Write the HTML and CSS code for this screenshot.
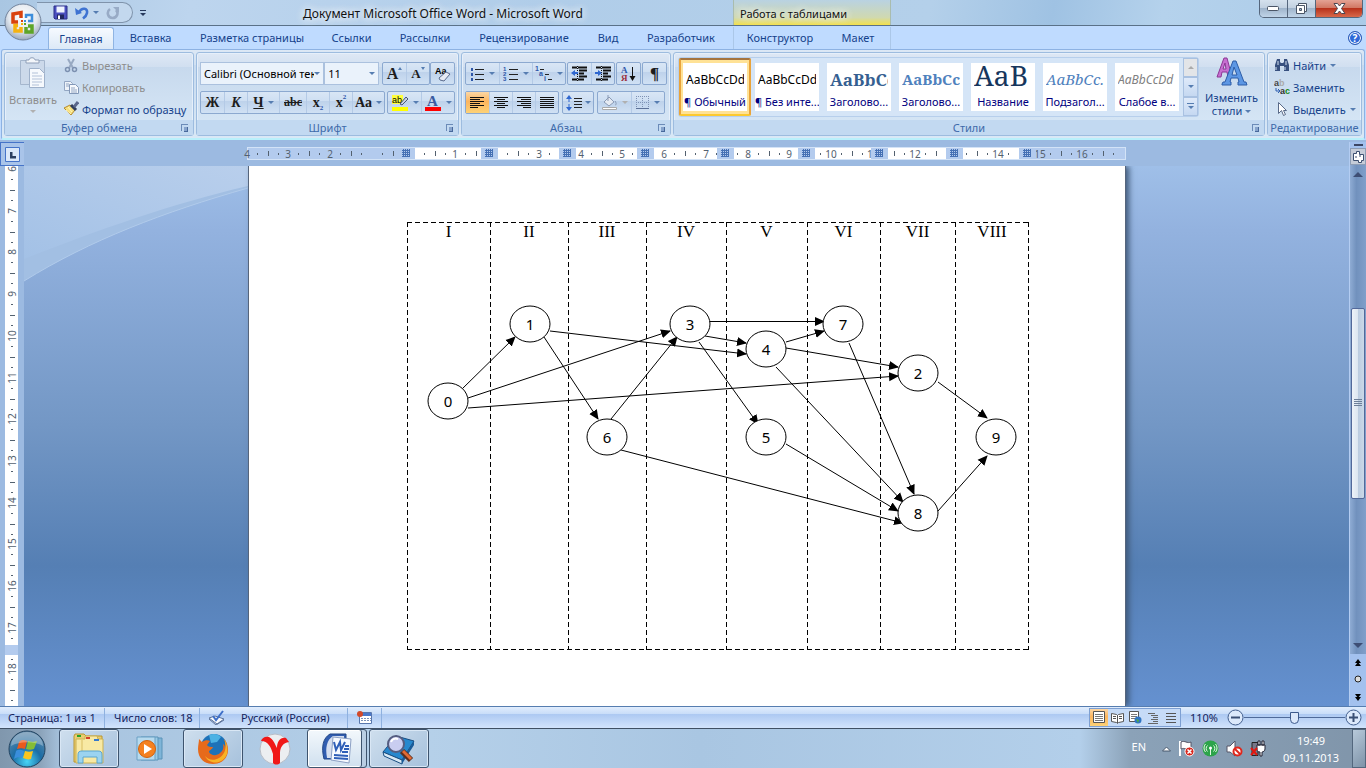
FILE: index.html
```html
<!DOCTYPE html>
<html lang="ru">
<head>
  <meta charset="UTF-8" />
  <meta name="viewport" content="width=device-width, initial-scale=1.0" />
  <title>Документ Microsoft Office Word - Microsoft Word</title>
  <link rel="stylesheet" href="styles.css">
</head>
<body>
  <header class="titlebar">
    <div class="quick-access">
      <button aria-label="Сохранить"><svg width="15" height="15" viewBox="0 0 15 15"><path d="M1 1h13v13H2l-1-1z" fill="#4a4fc0" stroke="#2b2f86"/><path d="M3.500 1.500h8v6h-8z" fill="#eef3ff"/><path d="M4 9.500h7V14H4z" fill="#20275e"/><path d="M5 10.500h2V14H5z" fill="#fff"/></svg></button>
      <button aria-label="Отменить"><svg width="15" height="14" viewBox="0 0 15 14"><path d="M4 6c3-5 9-4 8 1-.4 2.500-2 4-4 5.500" fill="none" stroke="#3f73d2" stroke-width="2.600"/><path d="M0 2l1 7 6-2z" fill="#3f73d2"/></svg></button>
      <i class="caret"></i>
      <button class="redo" aria-label="Вернуть"><svg width="14" height="14" viewBox="0 0 14 14"><path d="M4 3c-4 3-2 9 2.500 9S13 7 10 4" fill="none" stroke="#98abc6" stroke-width="2.600"/><path d="M7 1h6v6z" fill="#98abc6"/></svg></button>
    </div>
    <button class="qa-more" aria-label="Настройка панели быстрого доступа"><i class="caret"></i></button>
    <h1>Документ Microsoft Office Word - Microsoft Word</h1>
    <div class="context-title">Работа с таблицами</div>
    <div class="window-controls">
      <button aria-label="Свернуть"><svg width="13" height="6"><rect x=".5" y=".5" width="11" height="4" rx="1" fill="#fff" stroke="#4b5667"/></svg></button>
      <button aria-label="Восстановить"><svg width="13" height="13"><path d="M3.500 1.500h8v8h-8z" fill="#fff" stroke="#4b5667"/><path d="M1.500 3.500h8v8h-8z" fill="#fff" stroke="#4b5667"/><path d="M4.500 6.500h2v2h-2z" fill="#9fb4cb" stroke="#4b5667"/></svg></button>
      <button class="close" aria-label="Закрыть"><svg width="13" height="11" viewBox="0 0 13 11"><path d="M1 .5h3.500l2 2.500 2-2.500H12L8.500 5.500l3.500 5H8.500l-2-2.500-2 2.500H1l3.500-5z" fill="#fff" stroke="#4b4650"/></svg></button>
    </div>
  </header>
  <button class="office-button" aria-label="Кнопка Office">
    <svg width="38" height="38" viewBox="0 0 38 38">
      <defs><radialGradient id="orb" cx=".5" cy=".35" r=".65"><stop offset="0" stop-color="#fff"/><stop offset=".6" stop-color="#e3e8ef"/><stop offset="1" stop-color="#9aa9bd"/></radialGradient></defs>
      <circle cx="19" cy="19" r="18" fill="url(#orb)" stroke="#72839c"/>
      <g fill="none" stroke-width="3.500">
        <path d="M17 15V9.500l-8 1.500v8h5" stroke="#d9420e"/>
        <path d="M22 15v-3h6v6h-4" stroke="#3f8edb" stroke-width="2.500"/>
        <path d="M14 22.500H11V28h6v-4" stroke="#f5b211"/>
        <path d="M22 24v5h6v-6h-4" stroke="#5da528"/>
      </g>
      <path d="M17 17h2v2h-2z" fill="#d9420e"/><path d="M20 17h2v2h-2z" fill="#3f8edb"/><path d="M17 20h2v2h-2z" fill="#f5b211"/><path d="M20 20h2v2h-2z" fill="#5da528"/>
    </svg>
  </button>

  <nav class="tabs">
    <a href="#" class="tab home active">Главная</a>
    <a href="#" class="tab insert">Вставка</a>
    <a href="#" class="tab layout">Разметка страницы</a>
    <a href="#" class="tab links">Ссылки</a>
    <a href="#" class="tab mail">Рассылки</a>
    <a href="#" class="tab review">Рецензирование</a>
    <a href="#" class="tab view">Вид</a>
    <a href="#" class="tab developer">Разработчик</a>
    <div class="context-tabs">
      <a href="#" class="tab design">Конструктор</a>
      <a href="#" class="tab table-layout">Макет</a>
    </div>
    <button class="help" aria-label="Справка">?</button>
  </nav>

  <section class="ribbon">
    <div class="group clipboard">
      <div class="group-body">
        <button class="big disabled">
          <svg width="28" height="32" viewBox="0 0 28 32"><path d="M1.500 3.500h24v24h-24z" fill="#ccd9ea" stroke="#a5b6cd"/><path d="M7 6V3h3c0-3 6-3 6 0h4v3z" fill="#f3f6fa" stroke="#8f9fb8"/><path d="M10.500 11.500h10l5 5v14h-15z" fill="#f6f9fd" stroke="#9fb1ca"/><path d="M13 16h6M13 19h10M13 22h10M13 25h10M13 28h7" stroke="#b2c1d8"/></svg>
          <span>Вставить</span><i class="caret"></i>
        </button>
        <div class="stack">
          <button class="row disabled"><svg width="16" height="16" viewBox="0 0 16 16"><path d="M5 2l5 9M11 2L6 11" stroke="#98a9c2" stroke-width="2"/><circle cx="4.500" cy="12.500" r="2" fill="none" stroke="#7c90b0" stroke-width="1.500"/><circle cx="11.500" cy="12.500" r="2" fill="none" stroke="#7c90b0" stroke-width="1.500"/></svg>Вырезать</button>
          <button class="row disabled"><svg width="16" height="16" viewBox="0 0 16 16"><path d="M1.500 2.500h6l2 2v7h-8z" fill="#eef3f9" stroke="#93a6c3"/><path d="M6.500 5.500h6l3 3v6h-9z" fill="#f6f9fd" stroke="#8398b8"/><path d="M3 5h3M3 7h3M8 9h4M8 11h6M8 13h6" stroke="#93a6c3"/></svg>Копировать</button>
          <button class="row"><svg width="16" height="16" viewBox="0 0 16 16"><path d="M1 7l6-3 5 5-4 5z" fill="#f6df7d" stroke="#b58a2c"/><path d="M3 9l5 4M5 6l4 5" stroke="#fff6c0"/><path d="M8 4l5 5" stroke="#333f5c" stroke-width="3"/><path d="M11 6l4-5" stroke="#5b688c" stroke-width="3"/></svg>Формат по образцу</button>
        </div>
      </div>
      <footer>Буфер обмена<button class="launcher" aria-label="Буфер обмена"></button></footer>
    </div>

    <div class="group font">
      <div class="group-body rows">
        <div class="tool-row">
          <label class="combo face"><select aria-label="Шрифт"><option>Calibri (Основной текст)</option></select><i class="caret"></i></label>
          <label class="combo size"><select aria-label="Размер шрифта"><option>11</option></select><i class="caret"></i></label>
          <div class="tools gap-left">
            <button class="glyph grow" aria-label="Увеличить размер">A<i class="up"></i></button>
            <button class="glyph shrink" aria-label="Уменьшить размер">A<i class="caret"></i></button>
          </div>
          <div class="tools push"><button aria-label="Очистить формат"><svg width="18" height="16" viewBox="0 0 18 16"><text x="1" y="8" font-size="9" font-weight="bold" font-family="Liberation Sans">Aa</text><path d="M5 12l7-6 4 2-6 7-4-1z" fill="#e6eaf3" stroke="#5a6b8d"/></svg></button></div>
        </div>
        <div class="tool-row">
          <div class="tools">
            <button class="glyph bold" aria-label="Полужирный">Ж</button>
            <button class="glyph italic" aria-label="Курсив">К</button>
            <button class="glyph underline wide" aria-label="Подчеркнутый"><u>Ч</u><i class="caret"></i></button>
            <button class="glyph strike" aria-label="Зачеркнутый"><s>abc</s></button>
            <button class="glyph" aria-label="Подстрочный">x<sub>2</sub></button>
            <button class="glyph" aria-label="Надстрочный">x<sup>2</sup></button>
            <button class="glyph case" aria-label="Регистр">Aa<i class="caret"></i></button>
          </div>
          <div class="tools push">
            <button class="split" aria-label="Цвет выделения"><svg width="18" height="18" viewBox="0 0 18 18"><path d="M1 1h11v9H1z" fill="#ffff3c"/><text x="1" y="9" font-size="9" font-family="Liberation Sans">ab</text><path d="M9 10l6-7 2 2-6 6z" fill="#c9d3e4" stroke="#465578"/><path d="M1 13h16v4H1z" fill="#ff0"/></svg><i class="caret"></i></button>
            <button class="split" aria-label="Цвет текста"><svg width="18" height="18" viewBox="0 0 18 18"><text x="3" y="12" font-size="15" font-weight="bold" fill="#3a5ba0" font-family="Liberation Serif">A</text><path d="M1 13h16v4H1z" fill="red"/></svg><i class="caret"></i></button>
          </div>
        </div>
      </div>
      <footer>Шрифт<button class="launcher" aria-label="Шрифт"></button></footer>
    </div>

    <div class="group paragraph">
      <div class="group-body rows">
        <div class="tool-row spread">
          <div class="tools lists">
            <button class="split" aria-label="Маркеры"><svg width="15" height="14"><path d="M5 2.500h9M5 7.500h9M5 12.500h9" stroke="#222"/><path d="M1 1h2v3H1zM1 6h2v3H1zM1 11h2v3H1z" fill="#2d56a8"/></svg><i class="caret"></i></button>
            <button class="split" aria-label="Нумерация"><svg width="16" height="16"><path d="M6 3.500h9M6 8.500h9M6 13.500h9" stroke="#222"/><g font-size="6" font-weight="bold" fill="#2d56a8" font-family="Liberation Sans"><text x="0" y="5">1</text><text x="0" y="10">2</text><text x="0" y="15">3</text></g></svg><i class="caret"></i></button>
            <button class="split" aria-label="Многоуровневый список"><svg width="18" height="16"><path d="M5 3.500h4M10 8.500h4M13 13.500h4" stroke="#222"/><g font-size="7" font-weight="bold" fill="#2d56a8" font-family="Liberation Sans"><text x="0" y="5">1</text><text x="4" y="10">a</text><text x="9" y="15">i</text></g></svg><i class="caret"></i></button>
          </div>
          <div class="tools">
            <button aria-label="Уменьшить отступ"><svg width="17" height="15"><path d="M1 1.500h5M7 1.500h9M8 4.500h8M8 7.500h5M8 10.500h8M1 13.500h5M7 13.500h6" stroke="#111" stroke-width="2"/><path d="M6.500 0v15" stroke="#111" stroke-dasharray="1 1"/><path d="M0 7l4-3v2h3v2H4v2z" fill="#2f67cf"/></svg></button>
            <button aria-label="Увеличить отступ"><svg width="17" height="15"><path d="M1 1.500h5M7 1.500h9M8 4.500h8M8 7.500h5M8 10.500h8M1 13.500h5M7 13.500h6" stroke="#111" stroke-width="2"/><path d="M6.500 0v15" stroke="#111" stroke-dasharray="1 1"/><path d="M7 7L3 4v2H0v2h3v2z" fill="#2f67cf"/></svg></button>
          </div>
          <div class="tools"><button aria-label="Сортировка"><svg width="15" height="16"><g font-size="9" font-weight="bold" font-family="Liberation Serif"><text x="0" y="7" fill="#2d56a8">А</text><text x="0" y="15" fill="#9c2f3c">Я</text></g><path d="M11.500 1v11" stroke="#111"/><path d="M8.500 10h6l-3 5z" fill="#111"/></svg></button></div>
          <div class="tools"><button class="glyph pilcrow" aria-label="Отобразить все знаки">¶</button></div>
        </div>
        <div class="tool-row small-gap">
          <div class="tools align">
            <button class="pressed" aria-label="По левому краю"><svg width="15" height="12"><path d="M0 .5h14M0 2.500h10M0 4.500h14M0 6.500h10M0 8.500h14M0 10.500h8" stroke="#111"/></svg></button>
            <button aria-label="По центру"><svg width="15" height="12"><path d="M0 .5h14M3 2.500h8M0 4.500h14M3 6.500h8M0 8.500h14M3 10.500h8" stroke="#111"/></svg></button>
            <button aria-label="По правому краю"><svg width="15" height="12"><path d="M0 .5h14M4 2.500h10M0 4.500h14M4 6.500h10M0 8.500h14M6 10.500h8" stroke="#111"/></svg></button>
            <button aria-label="По ширине"><svg width="15" height="12"><path d="M0 .5h14M0 2.500h14M0 4.500h14M0 6.500h14M0 8.500h14M0 10.500h14" stroke="#111"/></svg></button>
          </div>
          <div class="tools"><button class="spacing" aria-label="Междустрочный интервал"><svg width="16" height="16"><path d="M3 3v10" stroke="#2f67cf" stroke-dasharray="4 2"/><path d="M0 4l3-4 3 4zM0 12l3 4 3-4z" fill="#2f67cf"/><path d="M8 3.500h8M8 6.500h8M8 9.500h8M8 12.500h8" stroke="#222"/></svg><i class="caret"></i></button></div>
          <div class="tools">
            <button class="split disabled" aria-label="Заливка"><svg width="17" height="17"><path d="M3 8l5-5 5 5-5 4z" fill="#e6ebf3" stroke="#8a9ab5"/><path d="M7 1v6M14 7c2 3 1 4 0 4" stroke="#8a9ab5" fill="none"/><path d="M1.500 13.500h14v2h-14z" fill="#fff" stroke="#aaa"/></svg><i class="caret"></i></button>
            <button class="split" aria-label="Границы"><svg width="14" height="14"><path d="M.5 0v12M6.500 0v12M12.500 0v12M0 .5h13M0 6.500h13" stroke="#7f93b5" stroke-dasharray="1 1"/><path d="M0 12.500h13" stroke="#5c7198"/></svg><i class="caret"></i></button>
          </div>
        </div>
      </div>
      <footer>Абзац<button class="launcher" aria-label="Абзац"></button></footer>
    </div>

    <div class="group styles">
      <div class="group-body">
        <div class="gallery">
          <button class="style selected"><span class="sample">AaBbCcDd</span><span class="name">¶ Обычный</span></button>
          <button class="style"><span class="sample">AaBbCcDd</span><span class="name">¶ Без инте...</span></button>
          <button class="style"><span class="sample heading1">AaBbCc</span><span class="name">Заголово...</span></button>
          <button class="style"><span class="sample heading2">AaBbCc</span><span class="name">Заголово...</span></button>
          <button class="style"><span class="sample title">АаВ</span><span class="name">Название</span></button>
          <button class="style"><span class="sample subtitle">AaBbCc.</span><span class="name">Подзагол...</span></button>
          <button class="style"><span class="sample subtle">AaBbCcDd</span><span class="name">Слабое в...</span></button>
          <div class="gallery-scroll">
            <button class="off" aria-label="Вверх"><i class="up"></i></button>
            <button aria-label="Вниз"><i class="caret"></i></button>
            <button class="more" aria-label="Дополнительно"><i class="caret"></i></button>
          </div>
        </div>
        <button class="big change">
          <svg width="32" height="30" viewBox="0 0 32 30"><path d="M1 20L8 1h3l5 19h-4l-1-5H6l-1 5zM7 12h3L9 6z" fill="#c66fd0" stroke="#8d3796" fill-rule="evenodd"/><path d="M6 27l1-2h2L17 4h3l8 21h2l1 3h-9v-3h1l-1-4h-7l-1 4h1v3H6zM16 18h5l-3-8z" fill="#5d97e4" stroke="#2c5da8" fill-rule="evenodd"/></svg>
          <span>Изменить<br>стили <i class="caret"></i></span>
        </button>
      </div>
      <footer>Стили<button class="launcher" aria-label="Стили"></button></footer>
    </div>

    <div class="group editing">
      <div class="group-body">
        <div class="stack">
          <button class="row"><svg width="16" height="16" viewBox="0 0 16 16"><path d="M3 2h3v3l1 1h2l1-1V2h3l2 6v6h-5V9H6v5H1V8z" fill="#37507f"/><path d="M2 10v3M4 4v4M11 10v3M12 4v4" stroke="#d6e2f4"/></svg>Найти<i class="caret"></i></button>
          <button class="row"><svg width="16" height="16" viewBox="0 0 16 16"><g font-size="9" font-weight="bold" font-family="Liberation Sans"><text x="0" y="7" fill="#444">a</text><text x="5" y="7" fill="#aaa">b</text><text x="6" y="15" fill="#333">a</text><text x="11" y="15" fill="#168a16">c</text></g><path d="M2 9v3h3M4 10l2 2-2 2" fill="none" stroke="#2f5fb0"/></svg>Заменить</button>
          <button class="row"><svg width="16" height="16" viewBox="0 0 16 16"><path d="M4.500 1.500v11l3-3 2 5 2-1-2-4h3z" fill="#fff" stroke="#596a88"/></svg>Выделить<i class="caret"></i></button>
        </div>
      </div>
      <footer>Редактирование</footer>
    </div>
  </section>

  <main class="editor">
    <div class="left-rail">
      <button class="tab-stop" aria-label="Позиция табуляции"><svg width="15" height="15"><path d="M.5.5h14v14H.5z" fill="#dbe8f9" stroke="#4674c8"/><path d="M5 5h2.500v4H11v2.500H5z" fill="#2b3f60"/></svg></button>
      <svg class="v-ruler" id="vRuler"></svg>
    </div>
    <div class="canvas">
      <div class="h-ruler-row"><svg class="h-ruler" id="hRuler"></svg></div>
      <div class="workspace">
        <svg class="swoosh" width="224" height="130" viewBox="0 0 224 130">
          <defs><linearGradient id="sky" x1="0" y1="1" x2="1" y2="0"><stop offset="0" stop-color="#a3c1e6"/><stop offset="1" stop-color="#b9cfec"/></linearGradient></defs>
          <path d="M0 0h224v22C140 46 66 74 0 115z" fill="#a2bfe3"/>
          <path d="M0 0h224v20C146 38 66 67 0 93z" fill="url(#sky)"/>
          <path d="M224 22C140 46 66 74 0 115" fill="none" stroke="#b1cbeb"/>
        </svg>
        <div class="page">
          <div class="schedule">
            <table>
              <tr><th>I</th><th>II</th><th>III</th><th>IV</th><th>V</th><th>VI</th><th>VII</th><th>VIII</th></tr>
            </table>
            <svg class="graph" viewBox="406 222 622 428">
              <defs><marker id="arrow" viewBox="0 0 10 10" refX="9" refY="5" markerWidth="10" markerHeight="10" markerUnits="userSpaceOnUse" orient="auto"><path d="M0 .5L10 5 0 9.500z"/></marker></defs>
              <g class="edges">
                <path d="M460 390L514 337"/><path d="M467 398L669 331"/><path d="M467 408L897 376"/>
                <path d="M549 331L745 354"/><path d="M543 337L597 419"/><path d="M610 419L676 337"/>
                <path d="M620 450L902 523"/><path d="M708 321.500L823 321.500"/><path d="M704 336L745 343"/>
                <path d="M698 342L757 424"/><path d="M785 342L823 331"/><path d="M785 348L897 367"/>
                <path d="M775 367L902 502"/><path d="M785 444L897 511"/><path d="M848 343L913 494"/>
                <path d="M937 382L986 418"/><path d="M937 511L986 456"/>
              </g>
              <g class="nodes">
                <ellipse cx="447" cy="401" rx="20" ry="18"/><text x="447" y="407">0</text>
                <ellipse cx="529" cy="324" rx="20" ry="18"/><text x="529" y="330">1</text>
                <ellipse cx="606" cy="437" rx="20" ry="18"/><text x="606" y="443">6</text>
                <ellipse cx="689" cy="324" rx="20" ry="18"/><text x="689" y="330">3</text>
                <ellipse cx="765" cy="349" rx="20" ry="18"/><text x="765" y="355">4</text>
                <ellipse cx="765" cy="437" rx="20" ry="18"/><text x="765" y="443">5</text>
                <ellipse cx="842" cy="324" rx="20" ry="18"/><text x="842" y="330">7</text>
                <ellipse cx="917" cy="373" rx="20" ry="18"/><text x="917" y="379">2</text>
                <ellipse cx="917" cy="513" rx="20" ry="18"/><text x="917" y="519">8</text>
                <ellipse cx="995" cy="437" rx="20" ry="18"/><text x="995" y="443">9</text>
              </g>
            </svg>
          </div>
        </div>
      </div>
    </div>
    <div class="scrollbar">
      <div class="splitter"></div>
      <button class="ruler-toggle" aria-label="Линейка"><svg width="13" height="13"><path d="M1.500 3.500h3v-2h3v3h4v6h-2v2h-3v-2h-5z" fill="#fff" stroke="#3c4f70"/><path d="M4 6v2M8 5v2" stroke="#3c4f70"/></svg></button>
      <div class="track">
        <button aria-label="Прокрутить вверх"><i class="up"></i></button>
        <div class="before"></div>
        <div class="thumb"><i></i></div>
        <div class="after"></div>
        <button aria-label="Прокрутить вниз"><i class="caret"></i></button>
      </div>
      <div class="browse">
        <button aria-label="Предыдущая страница"><svg width="7" height="8"><path d="M0 4l3-4 3 4zM0 7l3-4 3 4z"/></svg></button>
        <button aria-label="Выбор объекта"><svg width="9" height="9"><circle cx="4" cy="4" r="3" fill="#ddd" stroke="#222"/></svg></button>
        <button aria-label="Следующая страница"><svg width="7" height="8"><path d="M0 1l3 4 3-4zM0 4l3 4 3-4z"/></svg></button>
      </div>
    </div>
  </main>

  <div class="statusbar">
    <span class="cell pages">Страница: 1 из 1</span>
    <span class="cell words">Число слов: 18</span>
    <span class="cell lang"><svg width="17" height="15" viewBox="0 0 17 15"><path d="M1 8l6-2 9 3-7 5z" fill="#f6f9fd" stroke="#5d7399"/><path d="M1 9l7 6 8-5" fill="none" stroke="#5d7399"/><path d="M5 6l3 4 7-9" fill="none" stroke="#3e6fc8" stroke-width="2"/></svg>Русский (Россия)</span>
    <span class="cell macro"><svg width="15" height="13"><path d="M2.500 1.500h12v11h-12z" fill="#fff" stroke="#5877ad"/><path d="M3 2h11v3H3z" fill="#4a77c9"/><path d="M4 7.500h10M4 9.500h10" stroke="#7c92ba" stroke-dasharray="2 1"/><circle cx="3" cy="3" r="3" fill="#d2492a"/></svg></span>
    <div class="views">
      <button class="pressed" aria-label="Разметка страницы"><svg width="12" height="13"><path d="M.5.5h11v11H.5z" fill="#fff" stroke="#555"/><path d="M2 3.500h8M2 5.500h8M2 7.500h8M2 9.500h8" stroke="#777"/></svg></button>
      <button aria-label="Режим чтения"><svg width="13" height="12"><path d="M.5 1.500l5 1 1 1 1-1 5-1v8l-5 1-1 1-1-1-5-1z" fill="#fff" stroke="#555"/><path d="M6.500 3v8M2 4.500h3M2 6.500h3M8 4.500h3M8 6.500h3" stroke="#555"/></svg></button>
      <button aria-label="Веб-документ"><svg width="13" height="13"><path d="M.5.5h9v10h-9z" fill="#fff" stroke="#555"/><path d="M2 3.500h6M2 5.500h6M2 7.500h4" stroke="#777"/><circle cx="9" cy="9" r="3.500" fill="#2f74c4"/><path d="M7 8l3 1-1 3z" fill="#4caa42"/></svg></button>
      <button aria-label="Структура"><svg width="11" height="12"><path d="M0 1.500h7M3 3.500h7M5 5.500h5M3 7.500h7M5 9.500h5M0 11.500h10" stroke="#666"/></svg></button>
      <button aria-label="Черновик"><svg width="11" height="12"><path d="M0 1.500h10M0 4.500h10M0 7.500h10M0 10.500h10" stroke="#555" stroke-width="1"/></svg></button>
    </div>
    <button class="zoom-value">110%</button>
    <button class="zoom-button" aria-label="Уменьшить"><svg width="17" height="17"><circle cx="8.500" cy="8.500" r="7.500" fill="#dce9fb" stroke="#44608f"/><path d="M4 7.500h9v2H4z" fill="#3a4f74"/></svg></button>
    <input class="zoom-slider" type="range" min="10" max="210" value="110" aria-label="Масштаб">
    <button class="zoom-button" aria-label="Увеличить"><svg width="17" height="17"><circle cx="8.500" cy="8.500" r="7.500" fill="#dce9fb" stroke="#44608f"/><path d="M4 7.500h9v2H4z M7.500 4h2v9h-2z" fill="#3a4f74"/></svg></button>
  </div>

  <footer class="taskbar">
    <button class="start" aria-label="Пуск">
      <svg width="38" height="38" viewBox="0 0 38 38">
        <defs><radialGradient id="start" cx=".5" cy=".85" r=".8"><stop offset="0" stop-color="#48d5f6"/><stop offset=".5" stop-color="#1b6da5"/><stop offset="1" stop-color="#5d88aa"/></radialGradient></defs>
        <circle cx="19" cy="19" r="18" fill="url(#start)" stroke="#23435f"/>
        <path d="M11 12c3-3 5-2 8-1l-2 8c-3-1-5-1-8 0z" fill="#ea5a1c"/><path d="M20 11c3 1 5 1 9 0l-3 8c-3 1-5 1-8 0z" fill="#84bd35"/><path d="M8 21c3-2 5-1 8 0l-2 7c-3-1-5-1-8 1z" fill="#3a8edb"/><path d="M17 21c3 1 5 1 8 0l-2 8c-3 1-5 0-8-1z" fill="#fbc51f"/>
        <path d="M3 16a16 14 0 0 1 32 0c-8-5-24-5-32 0z" fill="#fff" opacity=".3"/>
      </svg>
    </button>
    <div class="apps">
      <button class="app open" aria-label="Проводник"><svg width="34" height="32" viewBox="0 0 34 32"><path d="M2 3l1-2h9l2 2h16v26H2z" fill="#e9cd72" stroke="#b9962f"/><path d="M13 6V3h12l1 3h5v24H4V6z" fill="#f8e9a4" stroke="#cbb050"/><path d="M5 2h4v2H5z" fill="#27a327"/><path d="M14 4h4v2h-4z" fill="#d43f2a"/><path d="M22 6h5v2h-5z" fill="#3779cc"/><path d="M10 7v20" stroke="#d8bd63"/><path d="M6 30v-8c0-3 1-4 4-4h16c3 0 4 1 4 4v8h-5v-6H11v6z" fill="#9bd3f0" stroke="#5ba6d0"/></svg></button>
      <button class="app" aria-label="Проигрыватель"><svg width="30" height="30" viewBox="0 0 30 30"><path d="M8 4h18v21H8z" fill="#7fb5d8" stroke="#5a93b8"/><path d="M5 3h17v23H5z" fill="#9acbe6" stroke="#5a93b8"/><path d="M1 3h18v23H1z" fill="#b7daee" stroke="#6aa0c4"/><circle cx="11" cy="15" r="8.500" fill="#f5811f" stroke="#d1620c"/><path d="M8 10l8 5-8 5z" fill="#fff"/></svg></button>
      <button class="app open" aria-label="Firefox"><svg width="32" height="32" viewBox="0 0 32 32"><circle cx="17" cy="14" r="13" fill="#1e72b8"/><path d="M12 2c5-2 9-1 12 2l-4 5-6 1z" fill="#4cb2e4"/><path d="M2 6l3 3c3-2 6-2 8-1l-3 4c1 2 4 2 6 2-1 3-4 3-4 5 2 4 8 4 11 1 3-2 4-5 3-9 2 1 2 3 2 4 1-3 0-6-1-9 3 3 4 7 4 11 0 8-6 14-15 14S1 25 1 16c0-4 1-7 1-10z" fill="#e66a1b"/><path d="M27 6c3 6 2 15-5 19-5 3-11 2-14-2 4 9 18 9 22-2 1-6 0-11-3-15z" fill="#f8b326"/></svg></button>
      <button class="app" aria-label="Яндекс.Браузер"><svg width="32" height="32" viewBox="0 0 32 32"><circle cx="16" cy="16" r="15" fill="#eceef1" stroke="#b7bdc7"/><path d="M2 8c1-3 4-5 8-4 4 2 6 7 8 11 0-6 3-11 9-10l3 4c-6 1-9 5-9 11v10c-2 2-5 2-7 0v-9C12 14 9 8 2 8z" fill="#f01818"/></svg></button>
      <button class="app open front" aria-label="Word"><svg width="32" height="32" viewBox="0 0 32 32"><path d="M3 26C0 14 2 5 9 1h16v25z" fill="#315db0" stroke="#234786"/><path d="M6 25C4 14 6 7 12 3h11v22z" fill="#fff" opacity=".8"/><path d="M12 4l18 2-2 24-18-3z" fill="#f7faff" stroke="#8ca0c4"/><path d="M13 9l2 8 4-8 1 8 4-8" fill="none" stroke="#2f5fb8" stroke-width="2"/><path d="M24 13h4M23 16h5M21 19h6M13 22l14 1M13 25l14 1" stroke="#2f5fb8" stroke-width="2"/></svg></button>
      <button class="app open" aria-label="Просмотр"><svg width="34" height="32" viewBox="0 0 34 32"><path d="M1 19L14 3l18 5-12 19z" fill="#2788ce" stroke="#174d81"/><path d="M1 19l19 8v4L2 23z" fill="#d8e8f4" stroke="#174d81"/><path d="M20 27L32 8v4L20 31z" fill="#185b99"/><path d="M20 18l9 9" stroke="#5b2e20" stroke-width="6"/><path d="M21 18l8 8" stroke="#e06a35" stroke-width="3"/><circle cx="14" cy="11" r="8" fill="#c9cdf0" stroke="#555d80" stroke-width="2"/><path d="M9 9c1-3 4-4 7-3" stroke="#fff" stroke-width="2" fill="none"/></svg></button>
    </div>
    <div class="tray">
      <span class="input-lang">EN</span>
      <button aria-label="Скрытые значки"><svg width="9" height="6"><path d="M.5 5l4-4 4 4z" fill="#fff" stroke="#47566b"/></svg></button>
      <button aria-label="Центр поддержки"><svg width="17" height="17"><path d="M2 1v15" stroke="#fff" stroke-width="2"/><path d="M3 2c4-2 6 2 10 0v7c-4 2-6-2-10 0z" fill="#fff" stroke="#556"/><circle cx="11.500" cy="11.500" r="4.500" fill="#d9281e" stroke="#fff"/><path d="M9.500 9.500l4 4M13.500 9.500l-4 4" stroke="#fff" stroke-width="1.500"/></svg></button>
      <button aria-label="Сеть"><svg width="17" height="17"><circle cx="8.500" cy="8.500" r="8" fill="#2ca44a"/><path d="M8.500 8v7M5.500 5.500a4 4 0 0 0 0 6M11.500 5.500a4 4 0 0 1 0 6M3.500 4a6 6 0 0 0 0 8M13.500 4a6 6 0 0 1 0 8" stroke="#e5f8e5" fill="none"/><circle cx="8.500" cy="8" r="1.500" fill="#fff"/></svg></button>
      <button aria-label="Громкость"><svg width="17" height="17"><path d="M1 6h3l5-5v15l-5-4H1z" fill="#fff" stroke="#556"/><circle cx="11.500" cy="11.500" r="4" fill="#fff" stroke="#e0271c" stroke-width="2"/><path d="M9 9l5 5" stroke="#e0271c" stroke-width="2"/></svg></button>
      <button aria-label="Питание"><svg width="16" height="17"><path d="M2 2.500h6v13H2z" fill="#778" stroke="#222"/><path d="M7 5h8v4c0 2-2 3-3 3v4h-2v-4c-2 0-3-1-3-3zM8 1h2v4H8zM12 1h2v4h-2z" fill="#fff" stroke="#223"/><path d="M1 8l6 7M7 8l-6 7" stroke="#e3170f" stroke-width="2"/></svg></button>
      <div class="clock"><span>19:49</span><span>09.11.2013</span></div>
    </div>
    <button class="show-desktop" aria-label="Свернуть все окна"></button>
  </footer>

  <script>
    const NS = "http://www.w3.org/2000/svg";

    function add(svg, tag, attrs, text) {
      const el = document.createElementNS(NS, tag);
      Object.keys(attrs).forEach(k => el.setAttribute(k, attrs[k]));
      if (text !== undefined) el.textContent = text;
      svg.appendChild(el);
    }

    // horizontal ruler: 1 cm steps, grid marks on the table columns
    function drawHorizontal() {
      const svg = document.getElementById("hRuler");
      const marks = [158, 241, 319, 397, 477, 558, 631, 706, 779];
      const hidden = [-1, 0, 2, 11, 13];
      add(svg, "rect", { x: 167, y: 0, width: 604, height: 11, fill: "#fff" });
      const free = x => marks.every(m => Math.abs(m - x) > 8);
      for (let n = -4; n <= 16; n++) {
        const x = Math.round(165.5 + 41.75 * n);
        if (!hidden.includes(n)) add(svg, "text", { x: x, y: 10, "text-anchor": "middle" }, Math.abs(n));
        [10, 21, 31].forEach(d => {
          const tall = d === 21;
          if (free(x + d)) add(svg, "rect", { x: x + d, y: tall ? 3 : 5, width: 1, height: tall ? 5 : 2 });
        });
      }
      add(svg, "text", { x: 619, y: 10 }, "1");
      marks.forEach(m => {
        add(svg, "rect", { x: m - 8, y: 0, width: 17, height: 11, fill: "#b3cbee" });
        for (let i = 0; i < 4; i++) {
          add(svg, "rect", { x: m - 3 + i * 2, y: 1, width: 1, height: 8, fill: "#4570b4" });
          add(svg, "rect", { x: m - 4, y: 2 + i * 2, width: 8, height: 1, fill: "#4570b4" });
        }
      });
    }

    function drawVertical() {
      const svg = document.getElementById("vRuler");
      for (let n = 6; n <= 18; n++) {
        const y = Math.round(3 + 41.7 * (n - 6));
        add(svg, "text", { x: 0, y: 0, "text-anchor": "middle", transform: `translate(11 ${y}) rotate(-90)` }, n);
        [10, 21, 31].forEach(d => {
          const tall = d === 21;
          add(svg, "rect", { x: tall ? 5 : 6, y: y + d, width: tall ? 5 : 2, height: 1 });
        });
      }
      add(svg, "rect", { x: 0, y: 479, width: 13, height: 10, fill: "#b3cbee" });
    }

    drawHorizontal();
    drawVertical();
  </script>
</body>
</html>
```
FILE: styles.css
```css
* {
  box-sizing: border-box;
}
html, body {
  margin: 0;
  height: 100%;
}
body {
  display: flex;
  flex-direction: column;
  position: relative;
  overflow: hidden;
  background: #bfdbff;
  color: #15428b;
  font-family: "Noto Sans", "Open Sans", sans-serif;
  font-size: 11px;
}
button {
  display: flex;
  align-items: center;
  justify-content: center;
  padding: 0;
  border: 0;
  background: none;
  color: inherit;
  font: inherit;
}
svg {
  display: block;
  flex: none;
}
a {
  color: inherit;
  text-decoration: none;
}
.caret, .up {
  display: inline-block;
  flex: none;
  border: 3px solid transparent;
  border-top: 3px solid #567db1;
  border-bottom: 0;
}
.up {
  border-top: 0;
  border-bottom: 3px solid #567db1;
}
.disabled {
  color: #8d8d8d;
}
.disabled .caret {
  border-top-color: #b0b0b0;
}

/* title bar */
.titlebar {
  display: flex;
  flex: none;
  height: 26px;
  background: linear-gradient(100deg, #a9c6e2, #bdd5ee 14%, #b0cde9 40%, #b4d0ea 68%, #9fc2e3 77%, #b5d2ec 85%, #abcbe8);
  border-bottom: 1px solid #5a7188;
}
.quick-access {
  display: flex;
  align-items: center;
  gap: 7px;
  width: 96px;
  height: 21px;
  margin: 2px 0 0 37px;
  padding-left: 16px;
  border: 1px solid #7f93ab;
  border-left: 0;
  border-radius: 0 11px 11px 0;
  background: #c3d8ee;
}
.quick-access .caret {
  margin-left: -4px;
}
.qa-more {
  flex-direction: column;
  gap: 2px;
  width: 20px;
}
.qa-more::before {
  content: "";
  width: 6px;
  height: 1px;
  background: #26395c;
}
.qa-more .caret {
  border-top-color: #26395c;
}
.titlebar h1 {
  flex: 0 1 580px;
  margin: 0;
  padding-top: 1px;
  color: #111;
  font-size: 12px;
  font-weight: normal;
  line-height: 26px;
  text-align: center;
  white-space: nowrap;
  text-shadow: 0 0 8px #fff, 0 0 8px #fff;
}
.context-title {
  flex: none;
  width: 158px;
  padding: 1px 0 0 6px;
  border: solid #a9bcae;
  border-width: 0 1px;
  background: linear-gradient(#b9d2e2, #d0d9b0 70%, #f3e14c);
  color: #111;
  line-height: 25px;
  text-shadow: 0 0 8px #fff, 0 0 8px #fff;
}
.window-controls {
  display: flex;
  height: 18px;
  margin: 0 3px 0 auto;
  border: 1px solid #55667c;
  border-top: 0;
  border-radius: 0 0 5px 5px;
  overflow: hidden;
}
.window-controls button {
  width: 28px;
  border-right: 1px solid #55667c;
  background: linear-gradient(#d5e1ed, #c0cfdf 50%, #9fb4cb 50%, #c0d4e8);
}
.window-controls .close {
  width: 46px;
  border: 0;
  background: linear-gradient(#e4a294, #d0745f 50%, #b8321c 50%, #d8694a);
}
.office-button {
  position: absolute;
  top: 3px;
  left: 4px;
}

/* ribbon tabs */
.tabs {
  display: flex;
  flex: none;
  align-items: flex-end;
  height: 23px;
  padding-left: 48px;
  font-size: 11px;
}
.tab {
  flex: none;
  height: 22px;
  line-height: 22px;
  text-align: center;
  white-space: nowrap;
}
.tab.active {
  border: 1px solid #8fb4e3;
  border-bottom: 0;
  border-radius: 3px 3px 0 0;
  background: linear-gradient(#f6faff, #dce9f7);
}
.home { width: 66px; }
.insert { width: 73px; }
.layout { width: 130px; }
.links { width: 69px; }
.mail { width: 78px; }
.review { width: 120px; }
.view { width: 48px; }
.developer { width: 98px; }
.context-tabs {
  display: flex;
  margin-left: 3px;
  border: solid #abc7e8;
  border-width: 0 1px;
}
.design { width: 92px; }
.table-layout { width: 64px; }
.help {
  align-self: center;
  width: 14px;
  height: 14px;
  margin: 0 4px 0 auto;
  border: 1px solid #2c5bb5;
  border-radius: 50%;
  background: #2e69d8;
  box-shadow: inset 0 0 0 1px #fff;
  color: #fff;
  font-size: 10px;
  font-weight: bold;
}

/* ribbon */
.ribbon {
  display: flex;
  flex: none;
  gap: 2px;
  height: 91px;
  margin: 0 1px;
  padding: 2px;
  border: 1px solid #8db2e3;
  border-bottom: 2px solid #b9f0fb;
  border-radius: 3px;
  background: linear-gradient(#dce8f5, #d0e0f2 17%, #c7daef 17%, #d9e8f6);
}
.group {
  display: flex;
  flex: none;
  flex-direction: column;
  border: 1px solid #9dbcdf;
  border-radius: 3px;
  background: linear-gradient(#dee8f5, #d1dff0 17%, #c7d9ed 17%, #d8e8f7);
  box-shadow: inset 0 0 0 1px #e6effa;
}
.group-body {
  display: flex;
  flex: 1;
  min-height: 0;
}
.group footer {
  display: flex;
  flex: none;
  justify-content: center;
  position: relative;
  height: 15px;
  background: #c2d9f1;
  color: #3e6aaa;
  line-height: 15px;
  white-space: nowrap;
}
.launcher {
  position: absolute;
  top: 4px;
  right: 5px;
  width: 7px;
  height: 7px;
  border: solid #6b8bb8;
  border-width: 1px 0 0 1px;
}
.launcher::after {
  content: "";
  width: 4px;
  height: 4px;
  margin: 2px 0 0 2px;
  border: solid #48699c;
  border-width: 0 1px 1px 0;
  background: #86a3cc;
}
.clipboard { width: 190px; }
.font { width: 263px; }
.paragraph { width: 210px; }
.styles { flex: 1; min-width: 0; }
.editing { width: 95px; }
.big {
  flex-direction: column;
  justify-content: flex-start;
  width: 56px;
  padding-top: 4px;
  font-size: 11px;
  line-height: 13px;
}
.big svg {
  margin-bottom: 4px;
}
.big > .caret {
  margin-top: 4px;
}
.stack {
  display: flex;
  flex-direction: column;
  padding-top: 1px;
}
.row {
  justify-content: flex-start;
  gap: 3px;
  height: 22px;
  padding-left: 2px;
  white-space: nowrap;
}
.row .caret {
  margin-left: 1px;
}
.rows {
  flex-direction: column;
  gap: 6px;
  padding: 9px 3px 0;
}
.tool-row {
  display: flex;
  height: 23px;
}
.tool-row.spread {
  justify-content: space-between;
}
.tool-row.small-gap {
  gap: 3px;
}
.tools {
  display: flex;
  border: 1px solid #8ca9d0;
  border-radius: 2px;
  background: linear-gradient(#d9e6f5, #cddef2 45%, #bed2eb 45%, #d0e1f4);
}
.tools button {
  width: 23px;
  border-left: 1px solid #b4cae6;
}
.tools button:first-child {
  border-left: 0;
}
.tools .split {
  gap: 4px;
  width: 33px;
}
.tools .spacing {
  gap: 3px;
  width: 30px;
}
.gap-left {
  margin-left: 3px;
}
.push {
  margin-left: auto;
}
.tools .pressed, .views .pressed {
  background: linear-gradient(#fbd6a4, #fcb55e 45%, #fdd276);
}
.glyph {
  color: #1d1d1d;
  font-family: "Liberation Serif", serif;
  font-size: 14px;
  font-weight: bold;
}
.tools .glyph {
  font-family: "Liberation Serif", serif;
  font-size: 14px;
  font-weight: bold;
}
.tools .underline, .tools .case {
  gap: 4px;
  width: 32px;
}
.tools .strike {
  width: 27px;
  font-size: 12px;
}
.italic {
  font-style: italic;
}
.glyph sub, .glyph sup {
  color: #2d56a8;
  font-size: 7px;
}
.glyph sub {
  align-self: flex-end;
  padding-bottom: 1px;
}
.glyph sup {
  align-self: flex-start;
  padding-top: 1px;
}
.tools .grow {
  font-size: 16px;
}
.tools .shrink {
  font-size: 13px;
}
.grow i, .shrink i {
  align-self: flex-start;
  margin-top: 4px;
  border-left-width: 2px;
  border-right-width: 2px;
}
.tools .pilcrow {
  font-size: 17px;
}
.combo {
  display: flex;
  align-items: center;
  height: 23px;
  padding-right: 3px;
  border: 1px solid #abc1de;
  background: #eaf2fb;
}
.combo select {
  flex: 1;
  width: 0;
  height: 21px;
  padding: 0 0 0 3px;
  border: 0;
  outline: 0;
  appearance: none;
  background: none;
  color: #000;
  font: inherit;
  text-overflow: clip;
}
.face { width: 125px; }
.size { width: 55px; }

/* styles gallery */
.gallery {
  display: flex;
  flex: none;
  height: 60px;
  margin: 4px 0 0 4px;
  border: 1px solid #b7cfec;
  border-radius: 3px;
  background: #d5e5f7;
}
.style {
  flex-direction: column;
  justify-content: flex-start;
  width: 72px;
  height: 58px;
  padding: 5px 4px;
  border-radius: 2px;
}
.style.selected {
  border: 2px solid #e9a33b;
  border-top-color: #a5743f;
  border-bottom-color: #fcc92f;
  padding: 3px 2px;
  background: #ffe296;
}
.sample, .name {
  flex: none;
  width: 64px;
  overflow: hidden;
  background: #fff;
  white-space: nowrap;
}
.sample {
  height: 31px;
  border: solid #fff;
  border-width: 0 3px;
  color: #000;
  font-size: 12px;
  line-height: 33px;
  text-align: left;
}
.name {
  height: 17px;
  color: #000080;
  line-height: 16px;
  text-align: center;
}
.heading1, .heading2, .title, .subtitle {
  font-family: "Noto Serif", "DejaVu Serif", "Liberation Serif", serif;
}
.heading1 {
  color: #365f91;
  font-size: 17px;
  font-weight: bold;
}
.heading2 {
  color: #4f81bd;
  font-size: 15px;
  font-weight: bold;
}
.title {
  color: #17365d;
  font-size: 28px;
  line-height: 25px;
}
.subtitle {
  color: #4f81bd;
  font-size: 15px;
  font-style: italic;
}
.subtle {
  color: #808080;
  font-style: italic;
}
.gallery-scroll {
  display: flex;
  flex-direction: column;
  width: 15px;
}
.gallery-scroll button {
  flex: 1;
  border: 1px solid #a9c1e1;
  background: linear-gradient(#dfeafa, #c5d8f1);
}
.gallery-scroll .off {
  background: #e3e5e8;
}
.off .up {
  border-bottom-color: #aaa;
}
.gallery-scroll .more {
  flex-direction: column;
  gap: 2px;
}
.more::before {
  content: "";
  width: 7px;
  height: 1px;
  background: #567db1;
}
.change {
  flex: 1;
}
.change .caret {
  margin-bottom: 2px;
}
.editing .row {
  padding-left: 6px;
}

/* rulers and document area */
.editor {
  display: flex;
  flex: 1;
  min-height: 0;
  padding-top: 2px;
  background: #9cbae1;
}
.left-rail {
  flex: none;
  width: 24px;
  overflow: hidden;
}
.tab-stop {
  width: 25px;
  height: 24px;
  border: 1px solid #4674c8;
  background: #a9c4e9;
}
.v-ruler {
  width: 13px;
  height: 540px;
  margin-left: 5px;
  background: #fff;
}
.h-ruler, .v-ruler {
  fill: #53616f;
  font-size: 10px;
}
.canvas {
  display: flex;
  flex: 1;
  flex-direction: column;
  min-width: 0;
}
.h-ruler-row {
  display: flex;
  flex: none;
  justify-content: center;
  height: 24px;
  padding-top: 5px;
}
.h-ruler {
  width: 879px;
  height: 13px;
  border: 1px solid #d3e3f7;
  background: #b3cbee;
  overflow: visible;
}
.workspace {
  display: flex;
  flex: 1;
  justify-content: center;
  position: relative;
  min-height: 0;
  overflow: hidden;
  background: linear-gradient(#9fbfe8, #93b2df 12%, #7397c5 48%, #557fb4 74%, #6591d0);
}
.swoosh {
  position: absolute;
  top: 0;
  left: 0;
}
.page {
  position: relative;
  flex: none;
  padding: 56px 96px 0 158px;
  border-left: 1px solid #56657c;
  background: #fff;
  box-shadow: 1px 0 #56657c, 4px 0 6px #3e5878;
}
.schedule {
  position: relative;
}
.schedule table {
  width: 622px;
  height: 428px;
  border-spacing: 0;
  table-layout: fixed;
  background:
    repeating-linear-gradient(to right, #000 0 5px, transparent 5px 8px) 0 0 / 100% 1px no-repeat,
    repeating-linear-gradient(to right, #000 0 5px, transparent 5px 8px) 0 100% / 100% 1px no-repeat,
    repeating-linear-gradient(#000 0 5px, transparent 5px 8px) 100% 0 / 1px 100% no-repeat;
}
.schedule th {
  width: 83px;
  padding: 0;
  background: repeating-linear-gradient(#000 0 5px, transparent 5px 8px) 0 0 / 1px 100% no-repeat;
  color: #000;
  font-family: "Liberation Serif", serif;
  font-size: 17px;
  font-weight: normal;
  line-height: 19px;
  vertical-align: top;
}
.schedule th:nth-child(2), .schedule th:nth-child(3) { width: 78px; }
.schedule th:nth-child(4) { width: 80px; }
.schedule th:nth-child(5) { width: 81px; }
.schedule th:nth-child(6) { width: 73px; }
.schedule th:nth-child(7) { width: 75px; }
.schedule th:nth-child(8) { width: 74px; }
.graph {
  position: absolute;
  inset: 0;
  width: 622px;
  height: 428px;
}
.edges {
  stroke: #000;
}
.edges path {
  marker-end: url(#arrow);
}
.nodes ellipse {
  fill: #fff;
  stroke: #000;
}
.nodes text {
  font-size: 15px;
  text-anchor: middle;
}

/* scroll bar */
.scrollbar {
  display: flex;
  flex: none;
  flex-direction: column;
  width: 17px;
  border-left: 1px solid #b4cdf2;
  background: #a3c1ee;
}
.splitter {
  width: 9px;
  height: 2px;
  margin: 2px auto;
  background: #3c4664;
}
.ruler-toggle {
  height: 17px;
  border: 1px solid #8d9db5;
  background: #c5ccd8;
}
.track {
  display: flex;
  flex: 1;
  flex-direction: column;
  padding: 0 1px;
  background: linear-gradient(to right, #8facd4, #7191bd 40%, #809fca);
}
.track button {
  flex: none;
  height: 18px;
}
.track .caret {
  border-width: 5px 5px 0;
  border-top-color: #3e4e74;
}
.track .up {
  border-width: 0 5px 5px;
  border-bottom-color: #3e4e74;
}
.before { flex: 126; }
.after { flex: 139; }
.thumb {
  display: flex;
  flex: 191;
  align-items: center;
  justify-content: center;
  border: 1px solid #53699a;
  border-radius: 2px;
  background: linear-gradient(to right, #eef3f9, #dde6f0 48%, #bccce0 52%, #cbd9e8);
}
.thumb i {
  width: 8px;
  height: 8px;
  background: repeating-linear-gradient(#6d7f99 0 1px, transparent 1px 2px);
}
.browse {
  flex: none;
  height: 52px;
}
.browse button {
  width: 100%;
  height: 17px;
}

/* status bar */
.statusbar {
  display: flex;
  flex: none;
  align-items: center;
  height: 22px;
  padding-right: 4px;
  border-top: 1px solid #567db0;
  background: linear-gradient(#e1edfd, #c7dcf8 35%, #adc9f2 35%, #d2e4fc);
  color: #14235c;
}
.cell {
  display: flex;
  flex: none;
  align-items: center;
  height: 20px;
  border-right: 1px solid #8fb1df;
  white-space: nowrap;
}
.pages {
  width: 105px;
  padding-left: 8px;
}
.words {
  width: 95px;
  padding-left: 9px;
}
.lang {
  gap: 16px;
  width: 148px;
  padding-left: 8px;
}
.macro {
  justify-content: center;
  width: 34px;
}
.views {
  display: flex;
  margin-left: auto;
  border: 1px solid #7d9fd2;
  background: #c6dbf7;
}
.views button {
  width: 18px;
  height: 17px;
}
.zoom-value {
  width: 46px;
}
.zoom-slider {
  width: 101px;
  height: 18px;
  margin: 0;
  appearance: none;
  background: linear-gradient(#4f6a99, #4f6a99) 0 50% / 100% 1px no-repeat;
}
.zoom-slider::-webkit-slider-thumb {
  appearance: none;
  width: 9px;
  height: 12px;
  border: 1px solid #3d5a8c;
  border-radius: 0 0 5px 5px;
  background: #dbe8fa;
}

/* taskbar */
.taskbar {
  display: flex;
  flex: none;
  height: 40px;
  border-top: 1px solid #3f5064;
  background: linear-gradient(to right, #8097ad, #8ba3ba 40px, #a8c4df 62px, #b5d0e9 430px, #a9c6e2 700px, #b3cfea 1080px, #8ba2b8 1130px, #8095aa);
}
.start {
  width: 54px;
}
.apps {
  display: flex;
  gap: 2px;
  margin-left: 5px;
}
.app {
  width: 60px;
  border-radius: 3px;
}
.app.open {
  border: 1px solid #3e546e;
  background: linear-gradient(135deg, #cfdfee, #a6c1dc);
  box-shadow: inset 0 0 0 1px #d9e7f5;
}
.app.front {
  background: linear-gradient(#f3f8fc, #d0e0ef);
  box-shadow: inset -4px 0 0 #b9cee3, inset -5px 0 0 #3e546e, inset 0 0 0 1px #fff;
}
.tray {
  display: flex;
  align-items: center;
  gap: 7px;
  margin-left: auto;
  color: #fff;
}
.input-lang {
  margin-right: 9px;
  padding-bottom: 4px;
}
.clock {
  display: flex;
  flex-direction: column;
  width: 64px;
  margin: 0 9px 0 6px;
  line-height: 17px;
  text-align: center;
}
.show-desktop {
  width: 14px;
  border: 1px solid #53677d;
  background: linear-gradient(135deg, #b7c9da, #7e93a8);
}
```
